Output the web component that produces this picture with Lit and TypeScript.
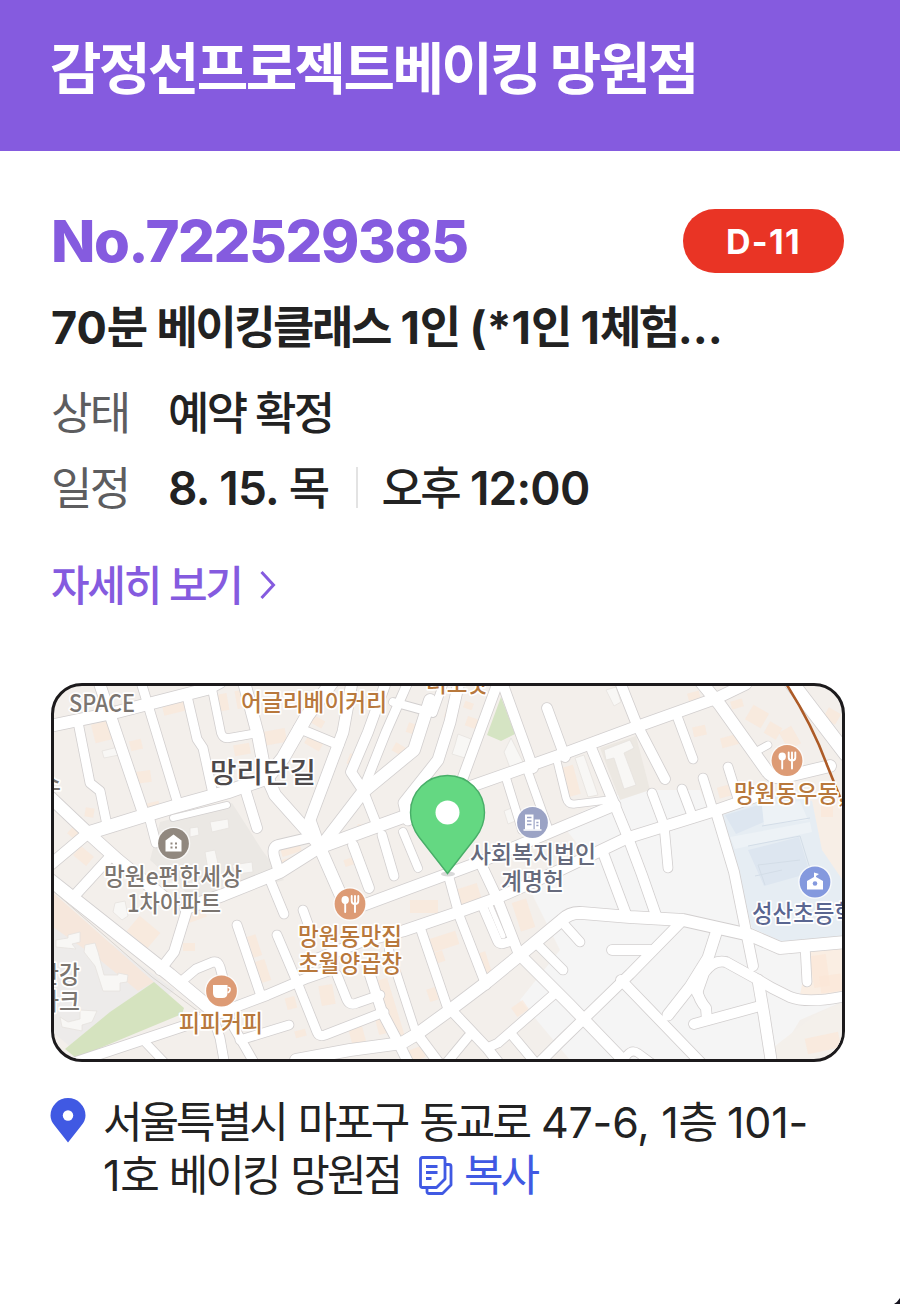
import { LitElement, html, svg, css } from 'lit';
import { customElement, property } from 'lit/decorators.js';

// width, path
const roads: [number, string][] = [
  [12, 'M50 726L117 712L207 689L220 682'],
  [9, 'M78 722L90 783L100 791L107 825'],
  [11, 'M99 682L143 812'],
  [9, 'M141 682L178 804'],
  [9, 'M187 696L197 739L203 748L213 794'],
  [8, 'M211 684L221 733Q223 739 229 738L252 734'],
  [12, 'M244 682L258 735L265 772L275 795L308 832L322 848'],
  [13, 'M88 833L143 816L173 807L227 792L267 778L283 758L307 716L332 682'],
  [12, 'M50 797L88 833L118 860L167 900'],
  [11, 'M50 865L88 833'],
  [10, 'M77 893L110 857'],
  [9, 'M150 820L156 843'],
  [6, 'M173 818L227 805'],
  [10, 'M246 792L257 828'],
  [13, 'M50 880L170 975L212 1010L228 1012'],
  [12, 'M186 908L223 895L280 872L318 848L367 830L414 813'],
  [10, 'M312 837L278 845Q272 847 274 856L279 872'],
  [10, 'M186 913L174 952L160 970'],
  [10, 'M64 1066L190 1024L222 1012L267 995L307 978L330 970'],
  [9, 'M183 980L196 969L213 962Q218 961 220 967L223 978'],
  [9, 'M237 925L260 993'],
  [9, 'M277 935L297 982L317 1032Q319 1037 325 1035L384 1012'],
  [9, 'M270 880L284 914'],
  [9, 'M303 910L312 935'],
  [8, 'M143 1040L166 1064'],
  [9, 'M212 1014L220 1038L225 1066'],
  [9, 'M226 1014L240 1038L256 1066'],
  [9, 'M240 1040L289 1025'],
  [12, 'M296 1060L350 1050L402 1043L417 1034L450 1010L487 982L520 955L562 920Q570 912 582 913L630 917L683 920L750 935L780 948L846 942'],
  [9, 'M337 975L347 1000Q350 1006 357 1003L380 995'],
  [10, 'M370 975L382 1012L400 1046L410 1066'],
  [8, 'M389 950L417 1036'],
  [9, 'M421 930L449 1012'],
  [9, 'M448 874L460 918L486 985'],
  [9, 'M482 905L497 940Q499 945 505 943L512 941'],
  [10, 'M480 862L497 898L518 952'],
  [11, 'M364 905L407 889L445 875L480 862L560 828L615 805'],
  [11, 'M310 962L360 942L403 931L453 914L497 898L560 870L627 838L717 810L766 793'],
  [10, 'M417 1034L441 1066'],
  [10, 'M453 1012L487 1048L501 1066'],
  [9, 'M487 1048L498 1043L553 995'],
  [9, 'M444 1066L468 1037'],
  [11, 'M523 958L570 1005L625 1062'],
  [9, 'M512 1035L538 1066'],
  [9, 'M538 945L563 970'],
  [9, 'M562 922L580 942'],
  [10, 'M680 923L630 974L560 1042L536 1066'],
  [10, 'M612 950L650 950'],
  [10, 'M621 980L704 1066'],
  [8, 'M619 1066L627 1055Q632 1049 638 1053L653 1064'],
  [11, 'M717 930L708 958L690 987L668 1015'],
  [10, 'M697 993L704 973Q714 959 726 962L755 978L772 988L790 997Q808 1004 846 996'],
  [10, 'M697 990Q699 1000 706 1008L707 1020'],
  [10, 'M694 1024L760 1006'],
  [11, 'M758 980L764 1015L772 1066'],
  [9, 'M805 945L807 982'],
  [10, 'M716 812L734 872L753 966'],
  [10, 'M602 850L626 914'],
  [10, 'M592 750L627 835L642 875L657 918'],
  [10, 'M620 682L637 725L665 779'],
  [11, 'M472 786L560 755L633 728L717 698L746 684'],
  [12, 'M701 682L720 705L767 771Q772 779 784 777L830 766'],
  [9, 'M677 716L693 759'],
  [9, 'M728 767L739 802'],
  [9, 'M703 778L713 810'],
  [9, 'M682 789L693 818'],
  [9, 'M652 793L664 825L668 868'],
  [7, 'M556 757L566 798Q568 805 575 804L608 800'],
  [7, 'M768 745L755 752'],
  [14, 'M791 682L846 754'],
  [10, 'M498 682L462 780'],
  [10, 'M502 682L533 768'],
  [10, 'M547 708L565 757'],
  [11, 'M459 682L450 722L438 760L404 803L408 820'],
  [12, 'M430 700L414 750L363 792L320 848L345 905'],
  [9, 'M408 682L386 732L363 790'],
  [10, 'M386 682L368 732L351 772L363 790'],
  [11, 'M352 682L343 732L310 820L320 848'],
  [9, 'M298 728L339 745'],
  [8, 'M393 702L433 713L444 682'],
  [9, 'M363 790L378 828'],
  [8, 'M403 832L418 868'],
  [10, 'M353 845L369 888'],
  [9, 'M382 835L394 876'],
  [8, 'M506 778L522 830'],
  [8, 'M528 772L548 828'],
  [5, 'M490 905L503 936'],
];

// pale building footprints: x, y, w, h, angle
const houses: number[][] = [
  [93, 722, 21, 19, -14], [130, 740, 12, 10, -14], [134, 771, 17, 12, -8], [163, 704, 24, 9, -14],
  [216, 694, 12, 17, -10], [236, 690, 14, 18, -10], [262, 730, 24, 14, -10], [234, 744, 16, 11, -10],
  [140, 803, 20, 10, -14], [85, 808, 9, 9, 10], [69, 828, 11, 10, 40], [75, 850, 17, 12, 40],
  [306, 736, 17, 12, 30], [312, 718, 12, 8, 30], [348, 755, 12, 11, 20], [393, 745, 13, 9, 30],
  [407, 724, 12, 10, 20], [445, 710, 10, 9, 20], [466, 718, 14, 10, 20], [464, 702, 9, 7, 20],
  [276, 858, 26, 10, -18], [281, 846, 20, 8, -18], [344, 857, 20, 7, -18], [357, 825, 12, 8, 10],
  [130, 922, 27, 20, 40], [182, 912, 24, 9, -20], [183, 943, 12, 8, 0], [250, 935, 9, 22, -18],
  [258, 960, 10, 22, -18], [320, 985, 14, 20, -10], [350, 1025, 14, 19, -15], [377, 1018, 10, 16, -15],
  [386, 978, 10, 60, -17], [410, 900, 28, 13, 0], [428, 935, 30, 14, -18], [431, 952, 13, 11, -18],
  [428, 988, 9, 13, -18], [458, 886, 22, 18, -18], [480, 952, 9, 24, -18], [516, 900, 15, 30, -18],
  [513, 1003, 14, 11, -35], [409, 1048, 15, 12, -20], [493, 910, 7, 22, -18],
  [693, 726, 13, 10, -12], [721, 736, 18, 10, -15], [748, 708, 18, 17, 30], [766, 724, 14, 13, 30],
  [783, 728, 14, 20, -30], [731, 700, 12, 8, -15], [718, 785, 20, 11, -15], [688, 692, 12, 9, -15],
  [825, 710, 14, 12, 30], [812, 955, 16, 32, -8], [820, 975, 22, 17, -8], [806, 1035, 34, 16, -12],
  [564, 766, 13, 30, -15], [821, 805, 12, 12, 0], [295, 1030, 11, 7, -15], [286, 997, 10, 12, -15],
];

// grey footprints of the apartment complexes
const flats = [
  'M102 751L118 747L119 755L104 758Z', 'M210 822L228 819L229 828L212 832Z', 'M190 828L198 827L199 835L190 837Z',
  'M205 852L215 850L219 868L208 870Z', 'M232 865L252 862L253 872L236 874Z', 'M68 935L80 932L80 942L72 944L76 949L56 947L56 940L68 938Z',
  'M85 945L95 943L98 952L104 975L118 975L118 973L128 975L127 982L120 983L120 991L103 991L95 966L84 952Z',
  'M60 1017L68 1022L80 1019L80 1010L97 1011L92 1022L82 1025L82 1031L62 1027Z', 'M115 903L125 901L128 916L122 920L113 912Z',
  'M455 745L458 734L471 739L465 758L452 754Z', 'M504 752L511 738L523 762L510 768Z', 'M604 750L630 740L634 748L624 753L636 785L624 789L614 758L606 760Z',
  'M606 690L616 687L621 702L614 706Z', 'M575 758L584 755L598 795L588 797Z', 'M504 811L514 807L518 820L508 824Z',
];

// digits and latin text keep a looser spacing than hangul
const mixed = (text: string) =>
  text.split(/([^\uac00-\ud7a3]+)/).map((part, i) => i % 2 ? html`<span class="latin">${part}</span>` : part);

@customElement('area-map')
export class AreaMap extends LitElement {

  static get styles() {
    return css`
      :host {
        display: block;
        height: 379px;
        box-sizing: border-box;
        border: 3px solid #1c1a1c;
        border-radius: 31px;
        overflow: hidden;
        background: #f3efeb;
      }
      svg {
        display: block;
        width: 100%;
        height: 100%;
      }
      .casing, .road {
        fill: none;
        stroke-linecap: round;
        stroke-linejoin: round;
      }
      .casing {
        stroke: #d2cfcf;
      }
      .road {
        stroke: #fff;
      }
      .house {
        fill: #fbe6d6;
        opacity: .6;
      }
      .flat {
        fill: #f8f7f5;
        stroke: #e6e2de;
        stroke-width: .8;
      }
      .label {
        font-family: "Noto Sans CJK KR", sans-serif;
        font-size: 23.5px;
        font-weight: 500;
        paint-order: stroke;
        stroke: #fff;
        stroke-width: 3.5px;
        stroke-linejoin: round;
      }
      .brown { fill: #b8783c; }
      .grey { fill: #7b7570; }
      .street { fill: #4d494b; font-size: 28px; }
      .slate { fill: #666a7c; }
      .navy { fill: #5a6691; }
    `;
  }

  label(x: number, y: number, w: number, cls: string, text: string) {
    return svg`<text class="label ${cls}" x=${x} y=${y} textLength=${w} lengthAdjust="spacingAndGlyphs">${text}</text>`;
  }

  badge(x: number, y: number, color: string, glyph: unknown) {
    return svg`
      <g transform="translate(${x} ${y})">
        <circle r="16.8" fill="#fff" opacity=".75"></circle>
        <circle r="15.4" fill=${color}></circle>
        ${glyph}
      </g>`;
  }

  food() {
    return svg`
      <ellipse cx="-4.8" cy="-4" rx="3.7" ry="4.1" fill="#fff"></ellipse>
      <path d="M-4.8 -1V8M5 -8V8M1.7 -8V-3Q1.7 0 5 0Q8.300 0 8.300 -3V-8" fill="none" stroke="#fff" stroke-width="1.9" stroke-linecap="round"></path>`;
  }

  render() {
    return html`
      <svg viewBox="54 686 788 373" preserveAspectRatio="none">
        <path d="M530 890L592 862L560 822L628 790L700 790L734 872L846 920V1000L800 1020L772 1066H575L520 1000L560 950Z" fill="#f5f5f5"></path>
        <path d="M160 822L232 803L262 850L284 880L200 905L150 860Z" fill="#ebe8e4"></path>
        <path d="M50 900L175 990L84 1058L50 1030Z" fill="#edebea"></path>
        <path d="M50 890L154 982L138 991L100 960L50 925Z" fill="#f6e7dc"></path>
        <path d="M600 748L636 736L650 790L620 800Z" fill="#ece8e2"></path>
        <path d="M809 948L846 944V996L800 995Z" fill="#faeee3"></path>
        <path d="M770 1050L815 1015L846 1001V1052L776 1062Z" fill="#f4f0eb"></path>
        <path d="M812 800H846V920L826 880Z" fill="#f7eee6"></path>

        <path d="M722 815L770 795L812 801L822 850L846 885V940L785 943L752 928L734 866Z" fill="#e6edf3"></path>
        <path d="M725 815L762 804L764 822L736 834Z M748 850L799 837L810 873L764 886Z" fill="#dde6f0"></path>
        <path d="M762 806L800 801L808 820L764 825Z M730 837L810 822L812 832L735 849Z" fill="#edf2f6"></path>
        <path d="M748 846L800 836L812 875M765 885L758 865L800 860M755 876L782 870M762 826L810 818" fill="none" stroke="#d3dde7"></path>

        <path d="M501 697L515 734L501 741L487 735Z" fill="#d5e4c3"></path>
        <path d="M154 982L184 1008L182 1014L76 1058L65 1049L110 1012Z" fill="#d5e3bf"></path>

        ${houses.map(([x, y, w, h, a]) => svg`
          <rect class="house" x=${x} y=${y} width=${w} height=${h} transform="rotate(${a} ${x + w / 2} ${y + h / 2})"></rect>`)}
        ${flats.map(d => svg`<path class="flat" d=${d}></path>`)}

        ${roads.map(([w, d]) => svg`<path class="casing" stroke-width=${w + 1.6} d=${d}></path>`)}
        ${roads.map(([w, d]) => svg`<path class="road" stroke-width=${w} d=${d}></path>`)}
        <path d="M50 888L152 977L210 1020" fill="none" stroke="#d8d4d0"></path>
        <path d="M785 682Q812 724 827 765L846 812" fill="none" stroke="#ad5b27" stroke-width="2.6"></path>

        ${this.label(69, 712, 66, 'grey', 'SPACE')}
        ${this.label(241, 711, 146, 'brown', '어글리베이커리')}
        ${this.label(426, 692, 62, 'brown', '더포맛')}
        ${this.label(210, 783, 106, 'street', '망리단길')}
        ${this.label(38, 790, 23, 'grey', '스')}
        ${this.label(104, 885, 138, 'grey', '망원e편한세상')}
        ${this.label(127, 912, 94, 'grey', '1차아파트')}
        ${this.label(38, 983, 42, 'grey', '한강')}
        ${this.label(38, 1010, 42, 'grey', '파크')}
        ${this.label(298, 945, 104, 'brown', '망원동맛집')}
        ${this.label(298, 972, 104, 'brown', '초월양곱창')}
        ${this.label(179, 1032, 84, 'brown', '피피커피')}
        ${this.label(470, 863, 126, 'slate', '사회복지법인')}
        ${this.label(501, 890, 63, 'slate', '계명헌')}
        ${this.label(734, 802, 111, 'brown', '망원동우동,')}
        ${this.label(752, 922, 103, 'navy', '성산초등학')}

        ${this.badge(173.5, 843.5, '#91887f', svg`
          <path d="M-8 -3L0 -9L8 -3V8H-8Z" fill="#fff"></path>
          <path d="M-3 -1h2v2h-2zM1.500 -1h2v2h-2zM-3 3h2v2h-2zM1.500 3h2v2h-2z" fill="#91887f"></path>`)}
        ${this.badge(350, 904, '#dd9b75', this.food())}
        ${this.badge(787, 760.5, '#dd9b75', this.food())}
        ${this.badge(221.5, 991, '#dd9b75', svg`
          <path d="M-8.500 -6H6V2Q6 7 1 7H-3.500Q-8.500 7 -8.500 2Z" fill="#fff"></path>
          <path d="M6 -3.500Q9 -4 8.500 -1Q8 1.500 6 1.500" fill="none" stroke="#fff" stroke-width="1.6"></path>`)}
        ${this.badge(532.5, 822.5, '#9ba3c5', svg`
          <path d="M-7.500 -8H1V7H-7.500ZM2.200 -3H7.500V7H2.200Z" fill="#fff"></path>
          <path d="M-5.500 -5H-1M-5.500 -1.500H-1M-5.500 2H-1M3.800 0H6M3.800 3H6" stroke="#9ba3c5" stroke-width="1.300"></path>
          <path d="M-9 7.500H9" stroke="#fff" stroke-width="1.500"></path>`)}
        ${this.badge(815, 882, '#8499de', svg`
          <path d="M-8 -1L-1 -5V-9.500L4 -8L1 -6V-5L8 -1V7.500H-8Z" fill="#fff"></path>
          <circle cy="1.500" r="2.300" fill="#8499de"></circle>`)}

        <ellipse cx="448" cy="874" rx="7" ry="2.5" fill="#000" opacity=".15"></ellipse>
        <path d="M447.500 873.500L419 837C413 829 410.500 821 410.500 812.500A37 37 0 0 1 484.500 812.500C484.500 821 482 829 476 837Z" fill="#64d882" stroke="#48ae68" stroke-width="1.400"></path>
        <circle cx="447.500" cy="812.500" r="12" fill="#fff"></circle>
      </svg>
    `;
  }
}

@customElement('app-root')
export class AppRoot extends LitElement {

  @property({ type: String }) store = '감정선프로젝트베이킹 망원점';
  @property({ type: String }) number = '722529385';

  static get styles() {
    return css`
      :host {
        display: block;
        position: relative;
        height: 1304px;
        overflow: hidden;
        background: #fff;
        color: #222;
        font-family: Inter, "Noto Sans CJK KR", sans-serif;
        white-space: nowrap;
      }
      .header {
        height: 151px;
        box-sizing: border-box;
        padding: 33px 50px 0;
        background: #855bdf;
        color: #fff;
      }
      .store {
        margin: 0;
        font-size: 56px;
        line-height: 72px;
        font-weight: 700;
        letter-spacing: -2.6px;
      }
      .body {
        padding: 58px 56px 0 51px;
      }
      .top {
        display: flex;
        align-items: center;
        justify-content: space-between;
        height: 64px;
      }
      .number {
        color: #855bdf;
        font-size: 58px;
        font-weight: 800;
        letter-spacing: -1.5px;
      }
      .dday {
        display: flex;
        align-items: center;
        justify-content: center;
        width: 161px;
        height: 64px;
        border-radius: 32px;
        background: #e93425;
        color: #fff;
        font-size: 34px;
        font-weight: 700;
        letter-spacing: 1.3px;
      }
      .product {
        margin-top: 25px;
        font-size: 45px;
        line-height: 60px;
        font-weight: 700;
        letter-spacing: -2.5px;
      }
      .product .latin {
        letter-spacing: 0;
      }
      .row {
        display: flex;
        align-items: center;
        height: 75px;
        font-size: 45px;
        font-weight: 500;
        letter-spacing: -2.6px;
      }
      .row.first {
        margin-top: 15px;
      }
      .row .latin {
        font-size: 46px;
        font-weight: 600;
        letter-spacing: -.8px;
      }
      .name {
        width: 117px;
        color: #5d5d5f;
        font-weight: 400;
      }
      .bar {
        width: 2px;
        height: 41px;
        margin: 4px 24px 0 28px;
        background: #e3e3e3;
      }
      .more {
        display: flex;
        align-items: center;
        gap: 17px;
        margin-top: 29px;
        height: 60px;
        color: #855bdf;
        font-size: 42px;
        font-weight: 500;
        letter-spacing: -2.3px;
      }
      .more svg {
        margin-top: 5px;
      }
      area-map {
        margin-top: 71px;
        margin-right: -1px;
      }
      .address {
        display: flex;
        gap: 17px;
        margin-top: 33.5px;
        font-size: 43px;
        line-height: 53.5px;
        letter-spacing: -3px;
      }
      .address .latin {
        letter-spacing: -.2px;
      }
      .pin {
        flex: none;
        margin: 2px 0 0 -1px;
      }
      .second {
        display: flex;
        align-items: center;
      }
      .copy {
        display: flex;
        align-items: center;
        gap: 11px;
        margin-left: 19px;
        color: #4059e3;
      }
      .corner {
        position: absolute;
        right: 0;
        bottom: 0;
      }
    `;
  }

  render() {
    return html`
      <div class="header">
        <h1 class="store">${this.store}</h1>
      </div>
      <div class="body">
        <div class="top">
          <div class="number">No.${this.number}</div>
          <div class="dday">D-11</div>
        </div>
        <div class="product">${mixed('70분 베이킹클래스 1인 (*1인 1체험...')}</div>
        <div class="row first">
          <span class="name">상태</span>
          <span>예약 확정</span>
        </div>
        <div class="row">
          <span class="name">일정</span>
          <span>${mixed('8. 15. 목')}</span>
          <span class="bar"></span>
          <span>${mixed('오후 12:00')}</span>
        </div>
        <div class="more">
          <span>자세히 보기</span>
          <svg width="18" height="30" viewBox="0 0 18 30">
            <path d="M2.500 2L14.500 15L2.500 28" fill="none" stroke="currentColor" stroke-width="3"></path>
          </svg>
        </div>
        <area-map></area-map>
        <div class="address">
          <svg class="pin" width="36" height="45" viewBox="0 0 36 45">
            <path d="M18 44.500L5 28Q.5 23 .5 17.500A17.500 17.500 0 0 1 35.500 17.500Q35.500 23 31 28Z" fill="#4059e3"></path>
            <circle cx="18" cy="17.500" r="5.200" fill="#fff"></circle>
          </svg>
          <div>
            <div>${mixed('서울특별시 마포구 동교로 47-6, 1층 101-')}</div>
            <div class="second">
              <span>${mixed('1호 베이킹 망원점')}</span>
              <span class="copy">
                <svg width="34" height="40" viewBox="0 0 34 40" fill="none" stroke="currentColor" stroke-width="2.800" stroke-linejoin="round">
                  <path d="M3.500 1.500H24Q26 1.500 26 3.500V23L17.500 31.500H3.500Q1.500 31.500 1.500 29.500V3.500Q1.500 1.500 3.500 1.500Z"></path>
                  <path d="M26 8.500H30Q32 8.500 32 10.500V29L23.500 37.500H10Q8 37.500 8 35.500V31.500"></path>
                  <path d="M7 10.500H18.500M7 16.500H18.500M7 22.500H12.500"></path>
                </svg>
                <span>복사</span>
              </span>
            </div>
          </div>
        </div>
      </div>
      <svg class="corner" width="6" height="6" viewBox="0 0 6 6"><path d="M6 0V6H0Q3.500 4 6 0Z" fill="#15131f"></path></svg>
    `;
  }
}
